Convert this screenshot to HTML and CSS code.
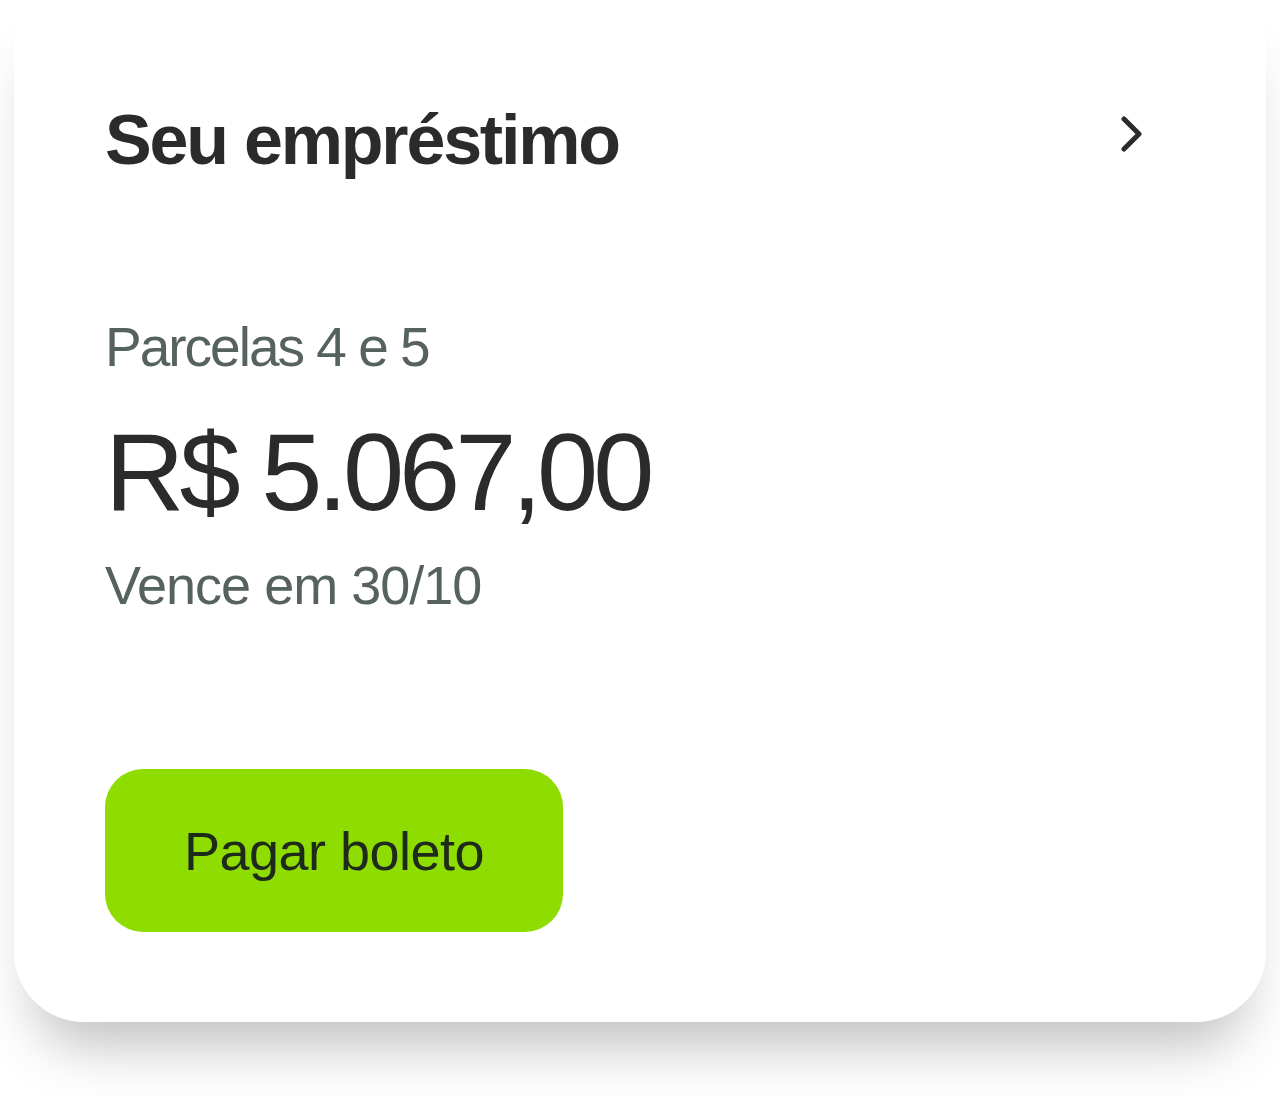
FILE: index.html
```html
<!DOCTYPE html>
<html lang="pt-BR">
<head>
  <meta charset="UTF-8" />
  <title>Seu empréstimo</title>
  <link rel="stylesheet" href="styles.css">
</head>
<body>

<div class="loan-card">
  <div class="card-header">
    <h2>Seu empréstimo</h2>
    <a href="#" class="chevron" aria-label="Ver detalhes">
      <svg width="40" height="40" viewBox="0 0 40 40">
        <path d="M13 3 L28 18 L13 33" fill="none" stroke="#2b2b2b" stroke-width="5" stroke-linecap="round" stroke-linejoin="round"/>
      </svg>
    </a>
  </div>

  <div class="installments">
    <p class="label">Parcelas 4 e 5</p>
    <div class="amount">R$ 5.067,00</div>
    <p class="due">Vence em 30/10</p>
  </div>

  <button class="pay-btn">Pagar boleto</button>
</div>

</body>
</html>
```

FILE: styles.css
```css
:root {
  --text-main: #2b2b2b;
  --text-muted: #56625c;
  --green: #8fdc00;
}

html, body {
  margin: 0;
  background: #fff;
  font-family: 'Liberation Sans', Arial, sans-serif;
  color: var(--text-main);
}

body {
  padding: 0 14px 80px;
}

.loan-card {
  background: #fff;
  border-radius: 0 0 70px 70px;
  box-shadow: 0 45px 55px -22px rgba(0,0,0,0.25);
  padding: 104px 105px 90px 91px;
  box-sizing: border-box;
  height: 1022px;
}

.card-header {
  display: flex;
  justify-content: space-between;
  align-items: flex-start;
}

.card-header h2 {
  margin: 0;
  font-size: 70px;
  font-weight: bold;
  letter-spacing: -2.2px;
  line-height: 72px;
}

.chevron {
  display: block;
  margin-top: 12px;
  margin-right: 10px;
}

.installments {
  margin-top: 141px;
}

.label {
  margin: 0;
  font-size: 55px;
  line-height: 60px;
  color: var(--text-muted);
  letter-spacing: -2px;
}

.amount {
  margin-top: 40px;
  font-size: 110px;
  line-height: 110px;
  letter-spacing: -5px;
}

.due {
  margin: 28px 0 0;
  font-size: 54px;
  line-height: 60px;
  color: var(--text-muted);
  letter-spacing: -1px;
}

.pay-btn {
  display: block;
  margin-top: 154px;
  width: 458px;
  height: 163px;
  border: none;
  border-radius: 38px;
  background: var(--green);
  color: #1e2a1a;
  font-family: 'Liberation Sans', Arial, sans-serif;
  font-size: 54px;
  letter-spacing: -0.5px;
  padding: 0;
  cursor: pointer;
}
```
